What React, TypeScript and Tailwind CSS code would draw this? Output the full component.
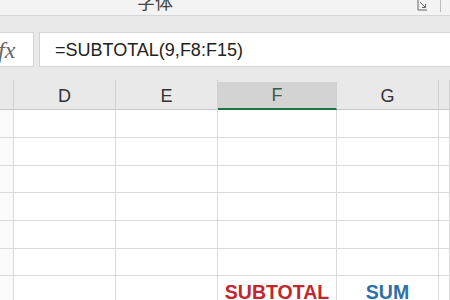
const cols = [
  { w: "w-[14px]", label: "" },
  { w: "w-[102px]", label: "D" },
  { w: "w-[102px]", label: "E" },
  { w: "w-[119px]", label: "F", active: true },
  { w: "w-[102px]", label: "G" },
  { w: "flex-1", label: "" },
];

const rowHeights = ["h-[28px]", "h-[28px]", "h-[27px]", "h-[28px]", "h-[28px]", "h-[27px]"];

function Launcher() {
  return (
    <svg width="11" height="11" viewBox="0 0 11 11" className="text-[#666]">
      <path d="M1 0 V10 H10" fill="none" stroke="currentColor" strokeWidth="1" />
      <path d="M3 2 L8.5 7.5 M8.5 4 V7.5 H5" fill="none" stroke="currentColor" strokeWidth="1" />
    </svg>
  );
}

export default function App() {
  return (
    <div className="w-[450px] h-[300px] overflow-hidden bg-[#e9e9e9] flex flex-col font-['Liberation_Sans',Arial,sans-serif]">
      {/* ribbon group label, cut off at top */}
      <div className="h-[16px] shrink-0 bg-[#f3f3f3] border-b border-[#d6d6d6] flex overflow-hidden">
        <div className="w-[310px] text-center -mt-[8px] text-[18px] leading-[18px] text-[#444] font-['Noto_Sans_CJK_SC',sans-serif]">
          字体
        </div>
        <div className="ml-[107px]">
          <Launcher />
        </div>
        <div className="ml-[12px] w-px h-[12px] bg-[#bdbdbd]" />
      </div>

      {/* formula bar */}
      <div className="h-[64px] shrink-0 pt-[16px] flex items-start">
        <div className="w-[34px] h-[35px] bg-white border-y border-r border-[#d4d4d4] flex items-center">
          <span className="-ml-[2px] font-['Liberation_Serif',serif] italic text-[24px] text-[#666] leading-none">
            fx
          </span>
        </div>
        <div className="ml-[5px] flex-1 h-[35px] bg-white border-y border-l border-[#d4d4d4] flex items-center pl-[15px]">
          <span className="text-[18px] text-[#222] leading-none">=SUBTOTAL(9,F8:F15)</span>
        </div>
      </div>

      {/* column headers */}
      <div className="h-[30px] shrink-0 flex border-b border-[#c6c6c6]">
        {cols.map((c, i) => (
          <div
            key={i}
            className={`${c.w} shrink-0 border-r border-[#d0d0d0] flex items-end justify-center pb-[4px] text-[18px] leading-none ${
              c.active
                ? "bg-[#d3d3d3] text-[#3c5a45] border-b-2 border-b-[#217346] -mb-px mt-[2px]"
                : "text-[#333]"
            }`}
          >
            {c.label}
          </div>
        ))}
      </div>

      {/* cells */}
      <div className="flex-1 bg-white flex flex-col">
        {rowHeights.map((h, r) => (
          <div key={r} className={`${h} shrink-0 flex border-b border-[#dadada]`}>
            {cols.map((c, i) => (
              <div key={i} className={`${c.w} shrink-0 border-r border-[#dadada] ${i === 0 ? "bg-[#fafafa]" : ""}`} />
            ))}
          </div>
        ))}
        <div className="h-[30px] shrink-0 flex">
          {cols.map((c, i) => (
            <div
              key={i}
              className={`${c.w} shrink-0 border-r border-[#dadada] flex items-end justify-center text-[19.5px] font-bold leading-none pb-[4px] ${
                i === 0 ? "bg-[#fafafa]" : ""
              }`}
            >
              {c.label === "F" && <span className="text-[#c1272d]">SUBTOTAL</span>}
              {c.label === "G" && <span className="text-[#2e6fa7]">SUM</span>}
            </div>
          ))}
        </div>
      </div>
    </div>
  );
}
